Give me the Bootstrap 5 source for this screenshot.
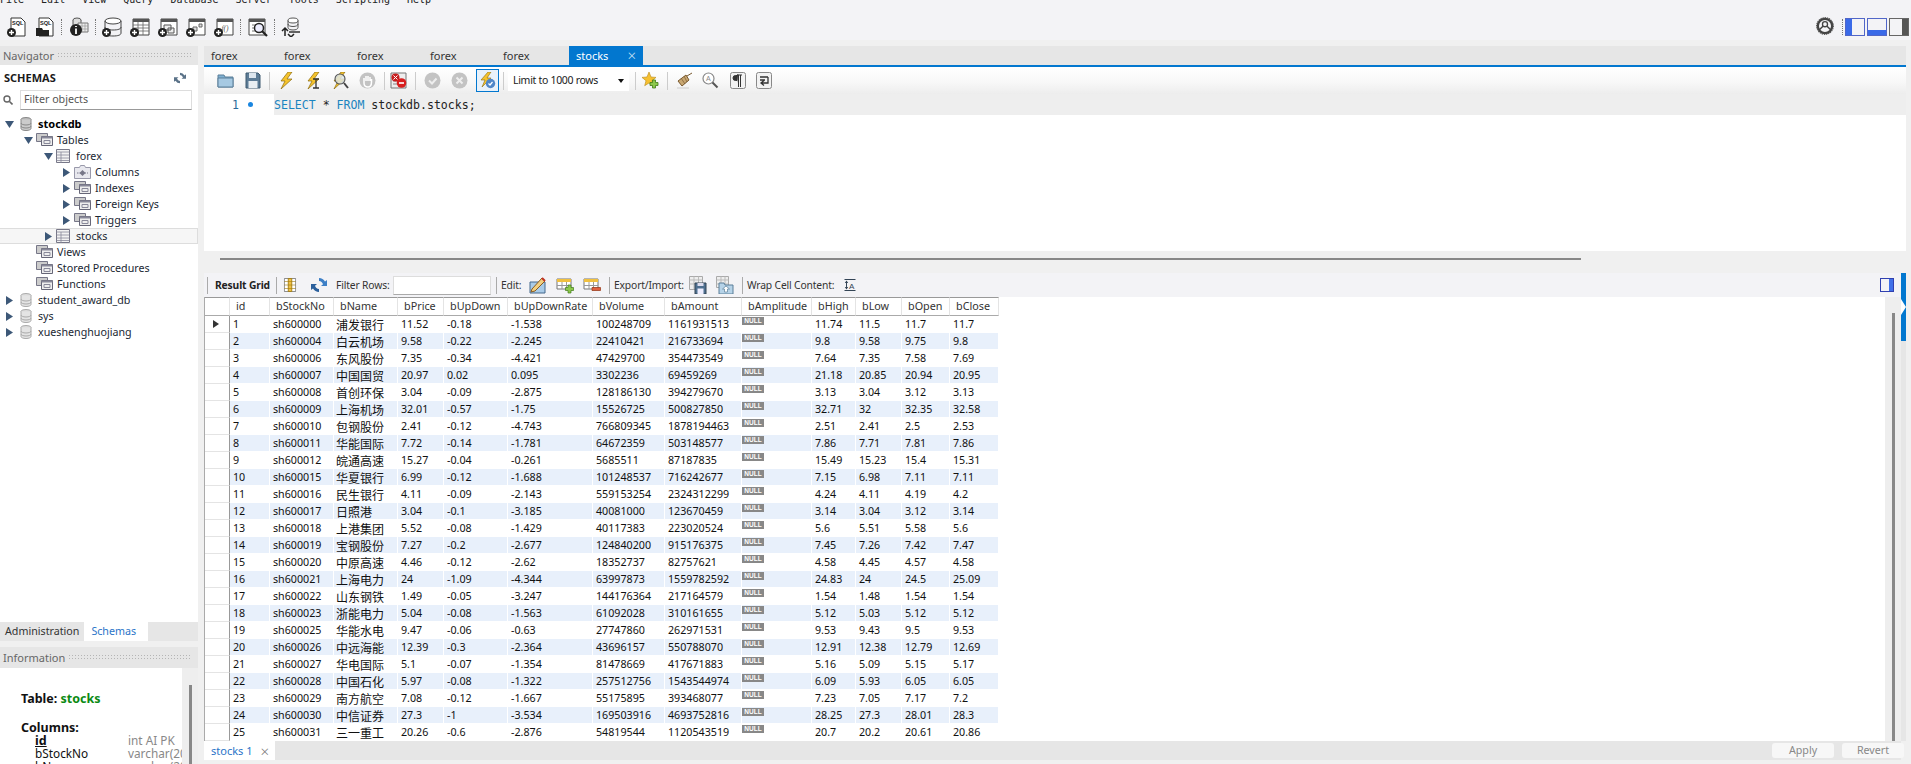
<!DOCTYPE html>
<html lang="en"><head><meta charset="utf-8"><title>MySQL Workbench</title>
<link href="https://cdn.jsdelivr.net/npm/bootstrap@5.3.0/dist/css/bootstrap.min.css" rel="stylesheet">
<style>
html,body{height:764px;overflow:hidden}
body{background:#f0f0f0;font:10.7px/1.2 "Noto Sans","Liberation Sans",sans-serif;color:#1a1a1a}
svg{display:block;flex:none}
.ico{width:20px;height:20px}.i17{width:17px;height:17px}.i16{width:16px;height:16px}.i18{width:18px;height:18px}.i14{width:14px;height:14px}.i12{width:12px;height:12px}
.wb-menu{height:5px;overflow:hidden;background:#f3f3f6;gap:17px;font:10px/11px "DejaVu Sans Mono",monospace;color:#222}
.wb-menu span{margin-top:-6px}
.wb-top{height:35px;background:#f3f3f6;padding:12px 2px 0 7px}
.vsep{width:1px;height:16px;border-left:1px dotted #777;margin:2px -1.75px 0;flex:none}
.wb-top .hg8{gap:8px}
.wb-main{height:724px;padding-top:6px;gap:6px}
.wb-left{width:198px;flex:none}
.wb-right{width:1702px;flex:none}
.phead{height:19px;background:#e6e6e6;color:#666;padding-left:3px;gap:3px;font-size:11px}
.dots{flex:1;height:7px;margin-right:6px;background-image:radial-gradient(#b5b5b5 .6px,transparent .8px);background-size:3px 3px}
.schem{height:557px;background:#fff}
.schem-h{height:25px;padding:1px 12px 0 4px;font-weight:700;font-size:11px}
.filt{height:20px;padding-left:3px;gap:3px;margin-bottom:6px}
.filt .inp{width:172px;height:20px;border:1px solid #ddd;border-bottom:1px solid #999;padding:2px 3px;color:#555;background:#fff}
.tr-row{height:16px;white-space:nowrap;color:#1a2733}
.tw{width:9px;height:9px;flex:none;margin-right:3px}
.l0 .tw{margin-right:6px}
.l0{padding-left:5px}.l1{padding-left:24px}.l2{padding-left:44px}.l3{padding-left:62px}
.tr-row .lb{margin-left:6px}
.tr-row .lb.s4{margin-left:4px}
.tr-row.sel{background:#f6f6f6;border:1px solid #ddd;border-width:1px 1px 1px 0}
.db{font-weight:700;color:#000;font-size:11px}
.btabs{height:19px;background:#e6e6e6}
.btabs span{padding:0 5px;line-height:19px;color:#333}
.btabs .on{background:#fff;color:#2a74c8;padding:0 12px 0 7px}
.infowrap{height:96px;background:#eee;overflow:hidden}
.info{width:182px;flex:none;height:96px;background:#fff;margin-right:7px;padding:24px 0 0 21px;font-size:11.8px;line-height:13px;overflow:hidden;color:#111}
.info b{font-size:12.5px}.grn{color:#0b8a12}
.info .cols{margin-top:16px}
.info .cl{padding-left:14px;white-space:nowrap;overflow:hidden}
.info .cl span:first-child{display:inline-block;width:93px}
.info .ty{color:#888}
.thumbv{width:3px;background:#888;flex:none}
.infothumb{margin-top:17px}
.info-h{margin-top:6px;height:21px}
.qtabs{height:21px;background:#e6e6e6;border-bottom:2px solid #0277cf}
.qt{width:73px;padding-left:7px;line-height:19px;color:#333;font-size:11px}
.qt.on{width:74px;background:#0277cf;color:#fff;justify-content:space-between;padding-right:7px}
.qt.on span{font-size:15px;font-weight:300;color:#cfe4f6}
.stool{height:27px;padding-left:13px;background:linear-gradient(#fff 0,#f8f8f8 55%,#ededed 100%)}
.s2{margin-left:2px}.s4{margin-left:4px}.s5{margin-left:5px}.s6{margin-left:6px}.s7{margin-left:7px}.s8{margin-left:8px}.s9{margin-left:9px}.s10{margin-left:10px}.s11{margin-left:11px}.s14{margin-left:14px}
.sp{width:1px;height:18px;background:#ccc;flex:none}
.tbox{width:23px;height:23px;border:1px solid #0277cf;padding:2px;background:#e8f1fa}
.lim{width:121px;height:21px;background:#fff;padding:0 5px;font-size:10.5px;letter-spacing:-.3px;justify-content:space-between}
.car{width:0;height:0;border:3.5px solid transparent;border-top:4px solid #111;border-bottom:0}
.editor{height:157px;background:#fff}
.gut{width:70px;flex:none;height:21px;padding-left:28px;color:#2a6a99;font:11.5px "DejaVu Sans Mono",monospace;gap:9px}
.bp{width:5px;height:5px;border-radius:50%;background:#1a86e0}
.curl{flex:1;height:21px;background:#eee;font:11.55px "DejaVu Sans Mono",monospace;color:#222}
.kw{color:#1a84c0}
.gap22{height:22px;padding:6px 325px 0 16px}
.hbar{height:2px;background:#888;margin-top:1px}
.rpanel{height:468px}
.rtool{height:24px;background:#f3f3f6;padding-left:3px;color:#333;padding-right:7px;font-size:10.3px;letter-spacing:-.15px;white-space:nowrap}
.rtool b{color:#222}
.w55{width:55px;flex:none}.w52{width:52px;flex:none}.w21{width:21px;flex:none}.w68{width:68px;flex:none}.w87{width:87px;flex:none}
.rsp{width:1px;height:17px;background:#aaa;flex:none}
.finp{width:98px;height:19px;background:#fff;border:1px solid #ddd;border-bottom-color:#aaa}
.gridw{height:444px;overflow:hidden}
.gridbox{flex:1;background:#fff;border-left:1px solid #aaa;overflow:hidden}
.rg{table-layout:fixed;width:794px;border-collapse:separate;border-spacing:0;margin:0}
.rg th{height:19px;padding:0 0 1px 6px;font-weight:400;color:#333;background:#fff;border-top:1px solid #999;border-bottom:1px solid #aaa;border-right:1px solid #e4e4e4;white-space:nowrap;overflow:hidden;font-size:10.8px}
.rg td{height:17px;padding:1px 0 0 3px;border-right:1px solid #fff;border-bottom:1px solid #fff;white-space:nowrap;overflow:hidden;color:#111;font-size:10.7px;line-height:15px;vertical-align:top}
.rg td:first-child{border-right:1px solid #999;border-bottom:1px solid #e4e4e4;background:#fff;padding-top:0}
.rg tbody tr:nth-child(even) td:not(:first-child){background:#e8f0fb}
.rg td.nl{padding:0}
.rg td.zh{font:12px/15px "Noto Sans CJK SC","Noto Sans",sans-serif;padding-left:2px}
.nul{display:block;width:22px;height:8px;background:#888;color:#fff;font:700 6.5px/8px "Liberation Sans",sans-serif;text-align:center;font-style:normal;margin-top:1px}
.rarr{width:0;height:0;border:4px solid transparent;border-left:6px solid #333;border-right:0;margin:4px 0 0 5px}
.vtrack{width:16px;flex:none;background:#eee;padding:16px 0 0 7px}
.vtrack .thumbv{height:100%}
.rsidew{width:5px;flex:none;background:#e6e6e6}
.rside{height:68px;background:#0277cf}
.rtabs{height:19px;background:#e6e6e6;margin-right:5px}
.rtabs .on{width:71px;background:#fff;color:#2a74c8;padding:0 6px 0 7px;justify-content:space-between;font-size:11px}
.rtabs .on span+span{font-size:15px;font-weight:300;color:#777}
.act{width:62px;height:15px;background:#f7f7f7;color:#888;text-align:center;line-height:15px;border-radius:3px;font-size:10.7px;padding:0;border:0}
.actw{gap:8px;margin-right:-3px}
.c25{width:25px}.c40{width:40px}.c64{width:64px}.c46{width:46px}.c85{width:85px}.c72{width:72px}.c77{width:77px}.c70{width:70px}.c44{width:44px}.c48{width:48px}.c49{width:49px}
</style></head><body>
<svg width="0" height="0" class="position-absolute"><defs>
<symbol id="pl" viewBox="0 0 20 20"><circle cx="4.500" cy="15.500" r="4.500" fill="#222"/><path d="M2 15.500h5M4.500 13v5" stroke="#fff" stroke-width="1.400"/></symbol>
<symbol id="doc" viewBox="0 0 20 20"><path d="M4 1h10l4 4v14H4z" fill="#fff" stroke="#333"/><text x="5" y="8" font-size="5.600" font-weight="700" font-family="Liberation Sans" fill="#222">SQL</text><use href="#pl"/></symbol>
<symbol id="open" viewBox="0 0 20 20"><path d="M4 1h10l4 4v14H4z" fill="#fff" stroke="#333"/><text x="5" y="8" font-size="5.600" font-weight="700" font-family="Liberation Sans" fill="#222">SQL</text><path d="M1 11h6l1 2h6v6H1z" fill="#222"/></symbol>
<symbol id="insp" viewBox="0 0 20 20"><ellipse cx="8" cy="3" rx="4" ry="2" fill="#ddd" stroke="#555"/><path d="M4 3v6h8V3" fill="#ddd" stroke="#555"/><path d="M9 6h10v9H9z" fill="#eee" stroke="#777"/><path d="M9 9h10M9 12h10M13 6v9M16 6v9" stroke="#999" stroke-width=".7"/><circle cx="7" cy="13" r="6" fill="#222"/><path d="M7 9v1M7 11.500V17" stroke="#fff" stroke-width="1.800"/></symbol>
<symbol id="nsch" viewBox="0 0 20 20"><ellipse cx="11" cy="4" rx="8" ry="3" fill="#fff" stroke="#444"/><path d="M3 4v12c0 2 3 3 8 3s8-1 8-3V4M3 10c0 2 3 3 8 3s8-1 8-3" fill="none" stroke="#444"/><use href="#pl"/></symbol>
<symbol id="ntab" viewBox="0 0 20 20"><path d="M3 2h16v16H3z" fill="#fff" stroke="#444"/><path d="M3 2h16v3H3z" fill="#555"/><path d="M3 8h16M3 11h16M3 14h16M8 5v13M13 5v13" stroke="#666" stroke-width=".8"/><use href="#pl"/></symbol>
<symbol id="nview" viewBox="0 0 20 20"><path d="M3 2h16v16H3z" fill="#fff" stroke="#444"/><path d="M3 2h16v3H3z" fill="#555"/><path d="M6 8h7v5H6zM10 11h6v5h-6z" fill="#eee" stroke="#555"/><use href="#pl"/></symbol>
<symbol id="nproc" viewBox="0 0 20 20"><path d="M3 2h16v16H3z" fill="#fff" stroke="#444"/><path d="M3 2h16v3H3z" fill="#555"/><path d="M7 10h4v4H7zM13 7h3v3h-3z" fill="#ddd" stroke="#666"/><use href="#pl"/></symbol>
<symbol id="nfun" viewBox="0 0 20 20"><path d="M3 2h16v16H3z" fill="#fff" stroke="#444"/><path d="M3 2h16v3H3z" fill="#555"/><text x="7.500" y="14" font-size="7.500" font-family="Liberation Serif" font-style="italic" fill="#555">f()</text><use href="#pl"/></symbol>
<symbol id="stab" viewBox="0 0 20 20"><path d="M1 2h16v16H1z" fill="#fff" stroke="#444"/><path d="M1 2h16v3H1z" fill="#555"/><path d="M4 8h4M4 11h3M4 14h3" stroke="#777"/><circle cx="11" cy="11" r="4.500" fill="#eef" stroke="#222" stroke-width="1.500"/><path d="M14 14l5 5" stroke="#222" stroke-width="2.200"/></symbol>
<symbol id="recon" viewBox="0 0 20 20"><ellipse cx="12" cy="3.500" rx="5" ry="2.500" fill="#fff" stroke="#555"/><path d="M7 3.500v7c0 1.500 2 2.500 5 2.500s5-1 5-2.500v-7M7 7c0 1.500 2 2.500 5 2.500S17 8.500 17 7" fill="none" stroke="#555"/><path d="M8 15h11" stroke="#333" stroke-width="1.500"/><path d="M1 14l3-3 3 3M4 11v8M7 17l3 3 3-3" fill="none" stroke="#222" stroke-width="1.500"/></symbol>
<symbol id="gear" viewBox="0 0 20 20"><circle cx="10" cy="10" r="8" fill="none" stroke="#444" stroke-width="2.600"/><circle cx="10" cy="10" r="9.300" fill="none" stroke="#555" stroke-width="1.200" stroke-dasharray="1.400 1"/><circle cx="10" cy="8" r="2.800" fill="none" stroke="#444" stroke-width="1.500"/><path d="M4 14l4-4M16 14l-4-4" stroke="#444" stroke-width="1.600"/></symbol>
<symbol id="fold" viewBox="0 0 17 17"><path d="M1 3h6l1 2h8v10H1z" fill="#7fb0d2" stroke="#5b7f99"/><path d="M1 6h15v9H1z" fill="#a6c9e2" stroke="#5b7f99"/></symbol>
<symbol id="save" viewBox="0 0 17 17"><path d="M2 1h12l2 2v13H2z" fill="#5d7c96" stroke="#3f5a70"/><path d="M5 1h7v5H5z" fill="#dde6ee"/><path d="M4.500 9h9v7h-9z" fill="#e9eef2"/></symbol>
<symbol id="bolt" viewBox="0 0 17 17"><path d="M10 0L3 9h4l-4 8 11-10H9l5-7z" fill="#f5c32c" stroke="#8a6a10" stroke-width=".7"/></symbol>
<symbol id="boltc" viewBox="0 0 17 17"><path d="M10 0L3 9h4l-4 8 11-10H9l5-7z" fill="#f5c32c" stroke="#8a6a10" stroke-width=".7"/><path d="M8 7h6M11 7v9M8 16h6" stroke="#333" stroke-width="1.300"/></symbol>
<symbol id="boltm" viewBox="0 0 17 17"><path d="M9 0L2 9h4l-4 8 11-10H8l5-7z" fill="#f5c32c" stroke="#8a6a10" stroke-width=".7"/><circle cx="8" cy="7" r="5" fill="#dfe8ee" fill-opacity=".8" stroke="#555" stroke-width="1.100"/><path d="M12 11l4 5" stroke="#444" stroke-width="2"/></symbol>
<symbol id="hand" viewBox="0 0 17 17"><circle cx="8.500" cy="8.500" r="8" fill="#c3c3c3"/><path d="M5 10V6M7 9V4M9 9V4M11 9V5M12.500 10V7M5 9v2c0 3 2 4 4 4s3.500-1 3.500-5" stroke="#fff" stroke-width="1.500" fill="none"/></symbol>
<symbol id="stopq" viewBox="0 0 17 17"><path d="M1 1h15v15H1z" fill="#eee" stroke="#777"/><path d="M3 9h11M3 12h11" stroke="#888"/><circle cx="5.500" cy="5.500" r="4" fill="#c81e1e"/><path d="M3.500 3.500l4 4m0-4l-4 4" stroke="#fff"/><circle cx="11.500" cy="11" r="4.800" fill="#d81e1e"/><path d="M9 11h5" stroke="#fff" stroke-width="1.600"/></symbol>
<symbol id="chk" viewBox="0 0 17 17"><circle cx="8.500" cy="8.500" r="8" fill="#c3c3c3"/><path d="M5 8.500l3 3 4.500-5" stroke="#eee" stroke-width="2" fill="none"/></symbol>
<symbol id="crs" viewBox="0 0 17 17"><circle cx="8.500" cy="8.500" r="8" fill="#c3c3c3"/><path d="M5.500 5.500l6 6m0-6l-6 6" stroke="#eee" stroke-width="2"/></symbol>
<symbol id="tog" viewBox="0 0 17 17"><path d="M9 0L2 8h4l-3 7 9-9H8l4-6z" fill="#f5c32c" stroke="#8a6a10" stroke-width=".6"/><circle cx="11.500" cy="11.500" r="4.700" fill="#4f86c8"/><path d="M9.500 11.500l1.500 1.500 2.500-3" stroke="#fff" stroke-width="1.200" fill="none"/></symbol>
<symbol id="star" viewBox="0 0 17 17"><path d="M7 0l2 5 5 .4-4 3.300 1.300 5L7 11l-4.300 2.700L4 8.700 0 5.400 5 5z" fill="#f6c030" stroke="#b88a18" stroke-width=".6"/><path d="M10.500 8h3v2.500H16v3h-2.500V16h-3v-2.500H8v-3h2.500z" fill="#8cc84b" stroke="#3f7a17" stroke-width=".8"/></symbol>
<symbol id="brm" viewBox="0 0 17 17"><path d="M16 1l-5 3M2 9l8-6 3 5-7 6z" fill="#c9a873" stroke="#7a5a30"/><path d="M5 6l4 6M8 4l3 6" stroke="#7a5a30" stroke-width=".7"/><path d="M1 16h12" stroke="#ccc"/></symbol>
<symbol id="fnd" viewBox="0 0 17 17"><circle cx="6.500" cy="6.500" r="5.500" fill="#fff" stroke="#888" stroke-width="1.200"/><text x="4" y="9" font-size="7" font-family="Liberation Sans" fill="#888">A</text><path d="M10.500 10.500l5 5" stroke="#555" stroke-width="2"/></symbol>
<symbol id="par" viewBox="0 0 17 17"><rect x=".5" y=".5" width="15" height="16" rx="2" fill="#f2f2f2" stroke="#888"/><path d="M7 3.500H5.500a2 2 0 0 0 0 5H7zM7 3h1.500v12M10.500 3v12M7 3h5" fill="#333" stroke="#333"/></symbol>
<symbol id="wrp" viewBox="0 0 17 17"><rect x=".5" y=".5" width="15" height="16" rx="2" fill="#f2f2f2" stroke="#888"/><path d="M4 5h8M12 5v6H6M8 8.500L5 11l3 2.500M4 8h5" fill="none" stroke="#333" stroke-width="1.300"/></symbol>
<symbol id="dbg" viewBox="0 0 12 14"><ellipse cx="6" cy="2.500" rx="5" ry="2" fill="#ddd" stroke="#aaa"/><path d="M1 2.500v9c0 1 2 2 5 2s5-1 5-2v-9" fill="#e4e4e4" stroke="#aaa"/><path d="M1 6c0 1 2 2 5 2s5-1 5-2M1 9c0 1 2 2 5 2s5-1 5-2" fill="none" stroke="#aaa"/></symbol>
<symbol id="dbd" viewBox="0 0 12 14"><ellipse cx="6" cy="2.500" rx="5" ry="2" fill="#bbb" stroke="#888"/><path d="M1 2.500v9c0 1 2 2 5 2s5-1 5-2v-9" fill="#ccc" stroke="#888"/><path d="M1 6c0 1 2 2 5 2s5-1 5-2M1 9c0 1 2 2 5 2s5-1 5-2" fill="none" stroke="#888"/></symbol>
<symbol id="tbl" viewBox="0 0 14 14"><path d="M.5.500h13v13H.5z" fill="#f2f2f2" stroke="#778"/><path d="M.5 3h13M.5 6h13M.5 9h13M.5 11.500h13M5 3v11" stroke="#889" stroke-width=".8"/></symbol>
<symbol id="grp" viewBox="0 0 17 14"><path d="M.5.500h11v8H.5z" fill="#ccc" stroke="#778"/><path d="M5.500 3.500h11v9h-11z" fill="#eee" stroke="#667"/><path d="M5.500 3.500h11v2h-11z" fill="#889"/><path d="M8 7.500h6v3H8z" fill="none" stroke="#889"/></symbol>
<symbol id="coli" viewBox="0 0 17 14"><path d="M.5 2.500h5l1-2h4l1 2h5v11H.5z" fill="#e8e8ee" stroke="#99a"/><path d="M8.500 5l3 3-3 3-3-3z" fill="#778"/><path d="M3 8h11" stroke="#778" stroke-dasharray="1.500 1"/></symbol>
<symbol id="arD" viewBox="0 0 9 9"><path d="M0 1h9L4.500 8z" fill="#3d5878"/></symbol>
<symbol id="arR" viewBox="0 0 9 9"><path d="M1 0v9l7-4.500z" fill="#3d5878"/></symbol>
<symbol id="edt" viewBox="0 0 18 18"><path d="M1 6h15v11H1z" fill="#a9cbe8" stroke="#44698c"/><path d="M3 13L13 2l3 3-10 10-4 1z" fill="#f2cf80" stroke="#8a5c20"/><path d="M13 2l3 3" stroke="#c03020" stroke-width="2"/></symbol>
<symbol id="radd" viewBox="0 0 18 18"><path d="M1 3h14v10H1z" fill="#fff" stroke="#777"/><path d="M1 3h14v3H1z" fill="#f0c040"/><path d="M1 9.500h14M6 6v7M10.500 6v7" stroke="#999"/><path d="M12 9h3v2.500h2.500v3H15V17h-3v-2.500H9.500v-3H12z" fill="#8cc84b" stroke="#3f7a17" stroke-width=".7"/></symbol>
<symbol id="rdel" viewBox="0 0 18 18"><path d="M1 3h14v10H1z" fill="#fff" stroke="#777"/><path d="M1 3h14v3H1z" fill="#f0c040"/><path d="M1 9.500h14M6 6v7M10.500 6v7" stroke="#999"/><path d="M9 11.500h8.500v3H9z" fill="#e06040" stroke="#903010" stroke-width=".7"/></symbol>
<symbol id="ex" viewBox="0 0 18 18"><path d="M.5.500h13v13H.5z" fill="#eee" stroke="#aaa"/><path d="M.5 4h13M.5 8h13M5 .5v13M9.500.5v13" stroke="#bbb"/><path d="M6 7h11v11H6z" fill="#4f7090" stroke="#345"/><path d="M8.500 7h6v3h-6z" fill="#dde"/><path d="M8.500 12.500h6V18h-6z" fill="#eef"/></symbol>
<symbol id="im" viewBox="0 0 18 18"><path d="M.5.500h12v11H.5z" fill="#eee" stroke="#aaa"/><path d="M.5 4h12M.5 8h12M5 .5v11M9 .5v11" stroke="#bbb"/><path d="M3 7h5l1 2h8v9H3z" fill="#b6d3e8" stroke="#5b7f99"/><path d="M10 10l3.500 3h-2v3h-3v-3h-2z" fill="#fff" stroke="#5b7f99" stroke-width=".7"/></symbol>
<symbol id="cols" viewBox="0 0 14 16"><path d="M.5.500h13v15H.5z" fill="#fff" stroke="#777"/><path d="M5 .500h4v15H5z" fill="#f0c040" stroke="#a07a10"/><path d="M.5 4h13M.5 8h13M.5 12h13" stroke="#a07a10" stroke-width=".7"/></symbol>
<symbol id="rfr" viewBox="0 0 16 16"><path d="M8 1a7 7 0 0 1 6 3.500L16 3v6h-6l2-1.800A4.500 4.500 0 0 0 8 4z" fill="#3d7fc6"/><path d="M8 15a7 7 0 0 1-6-3.500L0 13V7h6L4 8.800A4.500 4.500 0 0 0 8 12z" fill="#2a5f9c"/></symbol>
<symbol id="rf2" viewBox="0 0 16 16"><path d="M8 1a7 7 0 0 1 6 3.500L16 3v6h-6l2-1.800A4.500 4.500 0 0 0 8 4z" fill="#5a7288"/><path d="M8 15a7 7 0 0 1-6-3.500L0 13V7h6L4 8.800A4.500 4.500 0 0 0 8 12z" fill="#5a7288"/></symbol>
<symbol id="wcc" viewBox="0 0 12 12"><path d="M.5.500h11M.5 11.500h11M2.500 2v8" stroke="#345" fill="none"/><path d="M2.500 1.500L.8 4h3.400zM2.500 10.500L.8 8h3.400z" fill="#345"/><text x="5" y="9.500" font-size="8" font-family="Liberation Sans" fill="#345">A</text></symbol>
<symbol id="mag" viewBox="0 0 10 10"><circle cx="4" cy="4" r="3" fill="none" stroke="#666" stroke-width="1.400"/><path d="M6.500 6.500L9.500 9.500" stroke="#666" stroke-width="1.600"/></symbol>
</defs></svg>

<nav class="wb-menu d-flex"><span>File</span><span>Edit</span><span>View</span><span>Query</span><span>Database</span><span>Server</span><span>Tools</span><span>Scripting</span><span>Help</span></nav>

<div class="wb-top d-flex">
 <div class="d-flex hg8">
  <svg class="ico"><use href="#doc"/></svg><svg class="ico"><use href="#open"/></svg><i class="vsep"></i>
  <svg class="ico"><use href="#insp"/></svg><i class="vsep"></i>
  <svg class="ico"><use href="#nsch"/></svg><svg class="ico"><use href="#ntab"/></svg><svg class="ico"><use href="#nview"/></svg><svg class="ico"><use href="#nproc"/></svg><svg class="ico"><use href="#nfun"/></svg><i class="vsep"></i>
  <svg class="ico"><use href="#stab"/></svg><i class="vsep"></i>
  <svg class="ico"><use href="#recon"/></svg>
 </div>
 <div class="d-flex ms-auto align-items-start">
  <svg class="i18"><use href="#gear"/></svg>
  <i class="vsep s8"></i>
  <svg class="ico s4" viewBox="0 0 20 18"><rect x=".5" y=".5" width="19" height="17" fill="#f3f3f6" stroke="#5166c8"/><rect x="1" y="1" width="6" height="16" fill="#3a6ae8"/></svg>
  <svg class="ico s2" viewBox="0 0 20 18"><rect x=".5" y=".5" width="19" height="17" fill="#f3f3f6" stroke="#5166c8"/><rect x="1" y="12" width="18" height="5" fill="#3a6ae8"/></svg>
  <svg class="ico s2" viewBox="0 0 20 18"><rect x=".5" y=".5" width="19" height="17" fill="#f3f3f6" stroke="#666"/><rect x="13" y="1" width="6" height="16" fill="#555"/></svg>
 </div>
</div>

<div class="wb-main d-flex">
 <aside class="wb-left d-flex flex-column">
  <div class="phead d-flex align-items-center"><span>Navigator</span><i class="dots"></i></div>
  <div class="schem">
   <div class="schem-h d-flex align-items-center justify-content-between"><span>SCHEMAS</span><svg class="i12"><use href="#rf2"/></svg></div>
   <div class="filt d-flex align-items-center"><svg width="10" height="10"><use href="#mag"/></svg><span class="inp d-block s4">Filter objects</span></div>
   <div class="tree">
    <div class="tr-row db l0 d-flex align-items-center"><svg class="tw"><use href="#arD"/></svg><svg width="12" height="14"><use href="#dbd"/></svg><span class="lb">stockdb</span></div>
    <div class="tr-row l1 d-flex align-items-center"><svg class="tw"><use href="#arD"/></svg><svg width="17" height="14"><use href="#grp"/></svg><span class="lb s4">Tables</span></div>
    <div class="tr-row l2 d-flex align-items-center"><svg class="tw"><use href="#arD"/></svg><svg width="14" height="14"><use href="#tbl"/></svg><span class="lb">forex</span></div>
    <div class="tr-row l3 d-flex align-items-center"><svg class="tw"><use href="#arR"/></svg><svg width="17" height="14"><use href="#coli"/></svg><span class="lb s4">Columns</span></div>
    <div class="tr-row l3 d-flex align-items-center"><svg class="tw"><use href="#arR"/></svg><svg width="17" height="14"><use href="#grp"/></svg><span class="lb s4">Indexes</span></div>
    <div class="tr-row l3 d-flex align-items-center"><svg class="tw"><use href="#arR"/></svg><svg width="17" height="14"><use href="#grp"/></svg><span class="lb s4">Foreign Keys</span></div>
    <div class="tr-row l3 d-flex align-items-center"><svg class="tw"><use href="#arR"/></svg><svg width="17" height="14"><use href="#grp"/></svg><span class="lb s4">Triggers</span></div>
    <div class="tr-row sel l2 d-flex align-items-center"><svg class="tw"><use href="#arR"/></svg><svg width="14" height="14"><use href="#tbl"/></svg><span class="lb">stocks</span></div>
    <div class="tr-row l1 d-flex align-items-center"><i class="tw"></i><svg width="17" height="14"><use href="#grp"/></svg><span class="lb s4">Views</span></div>
    <div class="tr-row l1 d-flex align-items-center"><i class="tw"></i><svg width="17" height="14"><use href="#grp"/></svg><span class="lb s4">Stored Procedures</span></div>
    <div class="tr-row l1 d-flex align-items-center"><i class="tw"></i><svg width="17" height="14"><use href="#grp"/></svg><span class="lb s4">Functions</span></div>
    <div class="tr-row l0 d-flex align-items-center"><svg class="tw"><use href="#arR"/></svg><svg width="12" height="14"><use href="#dbg"/></svg><span class="lb">student_award_db</span></div>
    <div class="tr-row l0 d-flex align-items-center"><svg class="tw"><use href="#arR"/></svg><svg width="12" height="14"><use href="#dbg"/></svg><span class="lb">sys</span></div>
    <div class="tr-row l0 d-flex align-items-center"><svg class="tw"><use href="#arR"/></svg><svg width="12" height="14"><use href="#dbg"/></svg><span class="lb">xueshenghuojiang</span></div>
   </div>
  </div>
  <div class="btabs d-flex"><span>Administration</span><span class="on">Schemas</span></div>
  <div class="phead d-flex align-items-center info-h"><span>Information</span><i class="dots"></i></div>
  <div class="infowrap d-flex">
   <div class="info"><div><b>Table: <span class="grn">stocks</span></b></div>
    <div class="cols"><b>Columns:</b></div>
    <div class="cl"><span><b class="text-decoration-underline">id</b></span><span class="ty">int AI PK</span></div>
    <div class="cl"><span>bStockNo</span><span class="ty">varchar(20)</span></div>
    <div class="cl"><span>bName</span><span class="ty">varchar(20)</span></div>
   </div>
   <i class="thumbv infothumb"></i>
  </div>
 </aside>

 <main class="wb-right">
  <div class="qtabs d-flex"><span class="qt">forex</span><span class="qt">forex</span><span class="qt">forex</span><span class="qt">forex</span><span class="qt">forex</span><span class="qt on d-flex">stocks<span>×</span></span></div>
  <div class="stool d-flex align-items-center">
   <svg class="i17"><use href="#fold"/></svg><svg class="i17 s10"><use href="#save"/></svg><i class="sp s8"></i>
   <svg class="i17 s8"><use href="#bolt"/></svg><svg class="i17 s10"><use href="#boltc"/></svg><svg class="i17 s10"><use href="#boltm"/></svg><svg class="i17 s10"><use href="#hand"/></svg><i class="sp s8"></i>
   <svg class="i17 s5"><use href="#stopq"/></svg><i class="sp s8"></i>
   <svg class="i17 s8"><use href="#chk"/></svg><svg class="i17 s10"><use href="#crs"/></svg>
   <span class="tbox s8 d-block"><svg class="i17"><use href="#tog"/></svg></span><i class="sp s4"></i>
   <div class="lim s4 d-flex align-items-center"><span>Limit to 1000 rows</span><i class="car"></i></div><i class="sp s6"></i>
   <svg class="i17 s6"><use href="#star"/></svg><i class="sp s8"></i>
   <svg class="i17 s8"><use href="#brm"/></svg><svg class="i17 s9"><use href="#fnd"/></svg><svg class="i17 s11"><use href="#par"/></svg><svg class="i17 s9"><use href="#wrp"/></svg>
  </div>
  <div class="editor"><div class="d-flex align-items-center"><div class="gut d-flex align-items-center"><span>1</span><i class="bp"></i></div><div class="curl d-flex align-items-center"><span><span class="kw">SELECT</span> * <span class="kw">FROM</span> stockdb.stocks;</span></div></div></div>
  <div class="gap22"><div class="hbar"></div></div>
  <div class="rpanel d-flex">
   <div class="flex-grow-1 d-flex flex-column">
    <div class="rtool d-flex align-items-center">
     <i class="rsp"></i><b class="s7 w55">Result Grid</b><i class="rsp s6"></i><svg class="i14 s6" viewBox="0 0 14 16"><use href="#cols"/></svg>
     <svg class="i16 s14"><use href="#rfr"/></svg><span class="s9 w52">Filter Rows:</span><span class="finp s5 d-block"></span><i class="rsp s5"></i>
     <span class="s4 w21">Edit:</span><svg class="i18 s7"><use href="#edt"/></svg><svg class="i18 s9"><use href="#radd"/></svg><svg class="i18 s9"><use href="#rdel"/></svg><i class="rsp s8"></i>
     <span class="s4 w68">Export/Import:</span><svg class="i18 s7"><use href="#ex"/></svg><svg class="i18 s9"><use href="#im"/></svg><i class="rsp s8"></i>
     <span class="s4 w87">Wrap Cell Content:</span><svg class="i12 s10"><use href="#wcc"/></svg>
     <svg class="i14 ms-auto" viewBox="0 0 14 14"><rect x=".5" y=".5" width="13" height="13" fill="#f3f3f6" stroke="#3040b0"/><rect x="9" y="1" width="4" height="12" fill="#4070e8"/></svg>
    </div>
    <div class="gridw d-flex">
     <div class="gridbox">
      <table class="rg">
       <colgroup><col class="c25"><col class="c40"><col class="c64"><col class="c64"><col class="c46"><col class="c64"><col class="c85"><col class="c72"><col class="c77"><col class="c70"><col class="c44"><col class="c46"><col class="c48"><col class="c49"></colgroup>
       <thead><tr><th></th><th>id</th><th>bStockNo</th><th>bName</th><th>bPrice</th><th>bUpDown</th><th>bUpDownRate</th><th>bVolume</th><th>bAmount</th><th>bAmplitude</th><th>bHigh</th><th>bLow</th><th>bOpen</th><th>bClose</th></tr></thead>
       <tbody>
<tr><td><i class="rarr d-block"></i><td>1<td>sh600000<td class="zh">浦发银行<td>11.52<td>-0.18<td>-1.538<td>100248709<td>1161931513<td class="nl"><i class="nul">NULL</i><td>11.74<td>11.5<td>11.7<td>11.7
<tr><td><td>2<td>sh600004<td class="zh">白云机场<td>9.58<td>-0.22<td>-2.245<td>22410421<td>216733694<td class="nl"><i class="nul">NULL</i><td>9.8<td>9.58<td>9.75<td>9.8
<tr><td><td>3<td>sh600006<td class="zh">东风股份<td>7.35<td>-0.34<td>-4.421<td>47429700<td>354473549<td class="nl"><i class="nul">NULL</i><td>7.64<td>7.35<td>7.58<td>7.69
<tr><td><td>4<td>sh600007<td class="zh">中国国贸<td>20.97<td>0.02<td>0.095<td>3302236<td>69459269<td class="nl"><i class="nul">NULL</i><td>21.18<td>20.85<td>20.94<td>20.95
<tr><td><td>5<td>sh600008<td class="zh">首创环保<td>3.04<td>-0.09<td>-2.875<td>128186130<td>394279670<td class="nl"><i class="nul">NULL</i><td>3.13<td>3.04<td>3.12<td>3.13
<tr><td><td>6<td>sh600009<td class="zh">上海机场<td>32.01<td>-0.57<td>-1.75<td>15526725<td>500827850<td class="nl"><i class="nul">NULL</i><td>32.71<td>32<td>32.35<td>32.58
<tr><td><td>7<td>sh600010<td class="zh">包钢股份<td>2.41<td>-0.12<td>-4.743<td>766809345<td>1878194463<td class="nl"><i class="nul">NULL</i><td>2.51<td>2.41<td>2.5<td>2.53
<tr><td><td>8<td>sh600011<td class="zh">华能国际<td>7.72<td>-0.14<td>-1.781<td>64672359<td>503148577<td class="nl"><i class="nul">NULL</i><td>7.86<td>7.71<td>7.81<td>7.86
<tr><td><td>9<td>sh600012<td class="zh">皖通高速<td>15.27<td>-0.04<td>-0.261<td>5685511<td>87187835<td class="nl"><i class="nul">NULL</i><td>15.49<td>15.23<td>15.4<td>15.31
<tr><td><td>10<td>sh600015<td class="zh">华夏银行<td>6.99<td>-0.12<td>-1.688<td>101248537<td>716242677<td class="nl"><i class="nul">NULL</i><td>7.15<td>6.98<td>7.11<td>7.11
<tr><td><td>11<td>sh600016<td class="zh">民生银行<td>4.11<td>-0.09<td>-2.143<td>559153254<td>2324312299<td class="nl"><i class="nul">NULL</i><td>4.24<td>4.11<td>4.19<td>4.2
<tr><td><td>12<td>sh600017<td class="zh">日照港<td>3.04<td>-0.1<td>-3.185<td>40081000<td>123670459<td class="nl"><i class="nul">NULL</i><td>3.14<td>3.04<td>3.12<td>3.14
<tr><td><td>13<td>sh600018<td class="zh">上港集团<td>5.52<td>-0.08<td>-1.429<td>40117383<td>223020524<td class="nl"><i class="nul">NULL</i><td>5.6<td>5.51<td>5.58<td>5.6
<tr><td><td>14<td>sh600019<td class="zh">宝钢股份<td>7.27<td>-0.2<td>-2.677<td>124840200<td>915176375<td class="nl"><i class="nul">NULL</i><td>7.45<td>7.26<td>7.42<td>7.47
<tr><td><td>15<td>sh600020<td class="zh">中原高速<td>4.46<td>-0.12<td>-2.62<td>18352737<td>82757621<td class="nl"><i class="nul">NULL</i><td>4.58<td>4.45<td>4.57<td>4.58
<tr><td><td>16<td>sh600021<td class="zh">上海电力<td>24<td>-1.09<td>-4.344<td>63997873<td>1559782592<td class="nl"><i class="nul">NULL</i><td>24.83<td>24<td>24.5<td>25.09
<tr><td><td>17<td>sh600022<td class="zh">山东钢铁<td>1.49<td>-0.05<td>-3.247<td>144176364<td>217164579<td class="nl"><i class="nul">NULL</i><td>1.54<td>1.48<td>1.54<td>1.54
<tr><td><td>18<td>sh600023<td class="zh">浙能电力<td>5.04<td>-0.08<td>-1.563<td>61092028<td>310161655<td class="nl"><i class="nul">NULL</i><td>5.12<td>5.03<td>5.12<td>5.12
<tr><td><td>19<td>sh600025<td class="zh">华能水电<td>9.47<td>-0.06<td>-0.63<td>27747860<td>262971531<td class="nl"><i class="nul">NULL</i><td>9.53<td>9.43<td>9.5<td>9.53
<tr><td><td>20<td>sh600026<td class="zh">中远海能<td>12.39<td>-0.3<td>-2.364<td>43696157<td>550788070<td class="nl"><i class="nul">NULL</i><td>12.91<td>12.38<td>12.79<td>12.69
<tr><td><td>21<td>sh600027<td class="zh">华电国际<td>5.1<td>-0.07<td>-1.354<td>81478669<td>417671883<td class="nl"><i class="nul">NULL</i><td>5.16<td>5.09<td>5.15<td>5.17
<tr><td><td>22<td>sh600028<td class="zh">中国石化<td>5.97<td>-0.08<td>-1.322<td>257512756<td>1543544974<td class="nl"><i class="nul">NULL</i><td>6.09<td>5.93<td>6.05<td>6.05
<tr><td><td>23<td>sh600029<td class="zh">南方航空<td>7.08<td>-0.12<td>-1.667<td>55175895<td>393468077<td class="nl"><i class="nul">NULL</i><td>7.23<td>7.05<td>7.17<td>7.2
<tr><td><td>24<td>sh600030<td class="zh">中信证券<td>27.3<td>-1<td>-3.534<td>169503916<td>4693752816<td class="nl"><i class="nul">NULL</i><td>28.25<td>27.3<td>28.01<td>28.3
<tr><td><td>25<td>sh600031<td class="zh">三一重工<td>20.26<td>-0.6<td>-2.876<td>54819544<td>1120543519<td class="nl"><i class="nul">NULL</i><td>20.7<td>20.2<td>20.61<td>20.86
       </tbody>
      </table>
     </div>
     <div class="vtrack"><i class="thumbv d-block"></i></div>
    </div>
   </div>
   <div class="rsidew"><div class="rside position-relative"><svg class="position-absolute top-50 start-0 translate-middle-y" width="5" height="16" viewBox="0 0 5 16"><path d="M0 0l5 8-5 8z" fill="#fff"/></svg></div></div>
  </div>
  <div class="rtabs d-flex justify-content-between"><div class="on d-flex align-items-center"><span>stocks 1</span><span>×</span></div>
   <div class="actw d-flex align-items-center"><button class="act btn">Apply</button><button class="act btn">Revert</button></div></div>
 </main>
</div>
</body></html>
